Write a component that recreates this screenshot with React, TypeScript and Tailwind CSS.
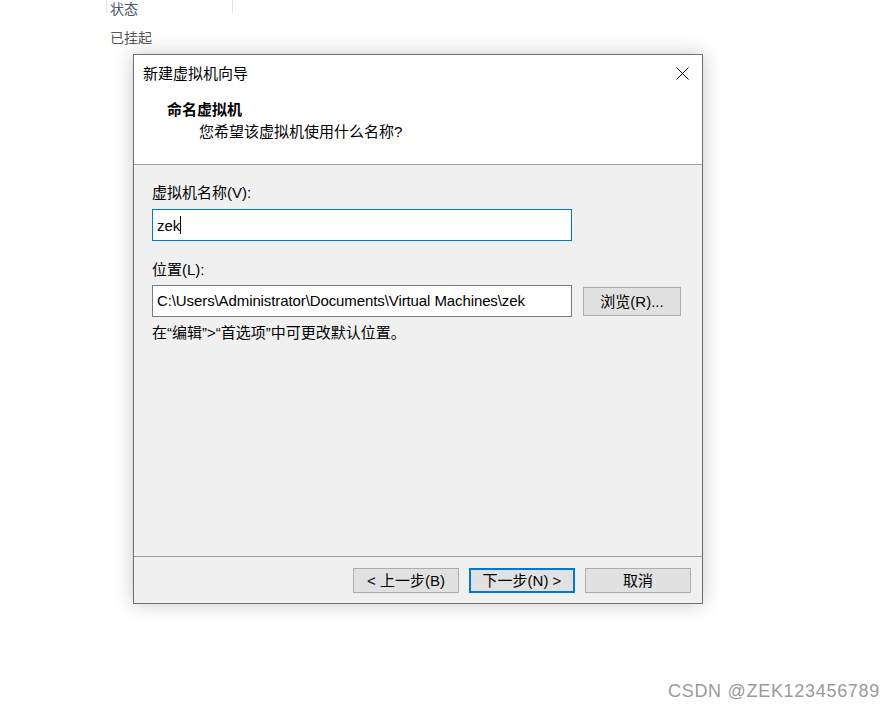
const font = "font-['Liberation_Sans','Noto_Sans_CJK_SC',sans-serif]"

function WinButton({ label, primary }: { label: string; primary?: boolean }) {
  return (
    <button
      className={
        "w-[106px] h-[25px] bg-[#e1e1e1] text-[15px] leading-none text-black flex items-center justify-center " +
        (primary ? "border-2 border-[#0078d7]" : "border border-[#adadad]")
      }
    >
      {label}
    </button>
  )
}

export default function App() {
  return (
    <div className={`relative w-[896px] h-[708px] bg-white overflow-hidden ${font}`}>
      {/* background list behind the dialog */}
      <div className="flex items-start ml-[106px]">
        <div className="w-px h-[13px] bg-[#e3e3e3]" />
        <span className="w-[125px] pl-[3px] text-[14px] leading-[18px] text-[#4a5568]">状态</span>
        <div className="w-px h-[13px] bg-[#e3e3e3]" />
      </div>
      <div className="ml-[110px] mt-[10px] text-[14px] leading-[20px] text-[#555]">已挂起</div>

      {/* wizard dialog */}
      <div className="ml-[133px] mt-[6px] w-[570px] h-[550px] border border-[#6f6f6f] bg-white flex flex-col shadow-[0_0_18px_rgba(0,0,0,0.22)] text-black">
        <div className="h-[36px] flex items-center justify-between pl-[9px] pr-[14px]">
          <span className="text-[15px] leading-none">新建虚拟机向导</span>
          <svg width="13" height="13" viewBox="0 0 13 13" className="mr-[-1px]">
            <path d="M0.5 0.5 L12.5 12.5 M12.5 0.5 L0.5 12.5" stroke="#000" strokeWidth="1" fill="none" />
          </svg>
        </div>

        <div className="h-[74px] pt-[8px] pl-[33px] border-b border-[#a0a0a0]">
          <div className="text-[15px] leading-[22px] font-bold">命名虚拟机</div>
          <div className="text-[15px] leading-[22px] pl-[32px]">您希望该虚拟机使用什么名称?</div>
        </div>

        <div className="flex-1 bg-[#f0f0f0] pl-[18px] pt-[18px] text-[15px]">
          <div className="leading-[20px]">虚拟机名称(V):</div>
          <div className="mt-[6px] w-[420px] h-[32px] bg-white border border-[#0078d7] flex items-center pl-[4px]">
            <span className="leading-none">zek</span>
            <span className="w-px h-[18px] bg-black" />
          </div>

          <div className="mt-[19px] leading-[20px]">位置(L):</div>
          <div className="mt-[5px] flex items-center gap-[11px]">
            <div className="w-[420px] h-[32px] bg-white border border-[#7a7a7a] flex items-center pl-[4px] tracking-[-0.1px]">
              C:\Users\Administrator\Documents\Virtual Machines\zek
            </div>
            <button className="w-[98px] h-[29px] bg-[#e1e1e1] border border-[#adadad] flex items-center justify-center leading-none">
              浏览(R)...
            </button>
          </div>

          <div className="mt-[6px] leading-[20px]">在“编辑”&gt;“首选项”中可更改默认位置。</div>
        </div>

        <div className="h-[47px] bg-[#f0f0f0] border-t border-[#a0a0a0] flex justify-end items-start pt-[11px] pr-[11px] gap-[10px]">
          <WinButton label="< 上一步(B)" />
          <WinButton label="下一步(N) >" primary />
          <WinButton label="取消" />
        </div>
      </div>

      {/* watermark */}
      <div className="absolute right-[16px] bottom-[5px] text-[18px] tracking-[0.7px] text-[#9a9a9a] leading-[24px]">
        CSDN @ZEK123456789
      </div>
    </div>
  )
}
